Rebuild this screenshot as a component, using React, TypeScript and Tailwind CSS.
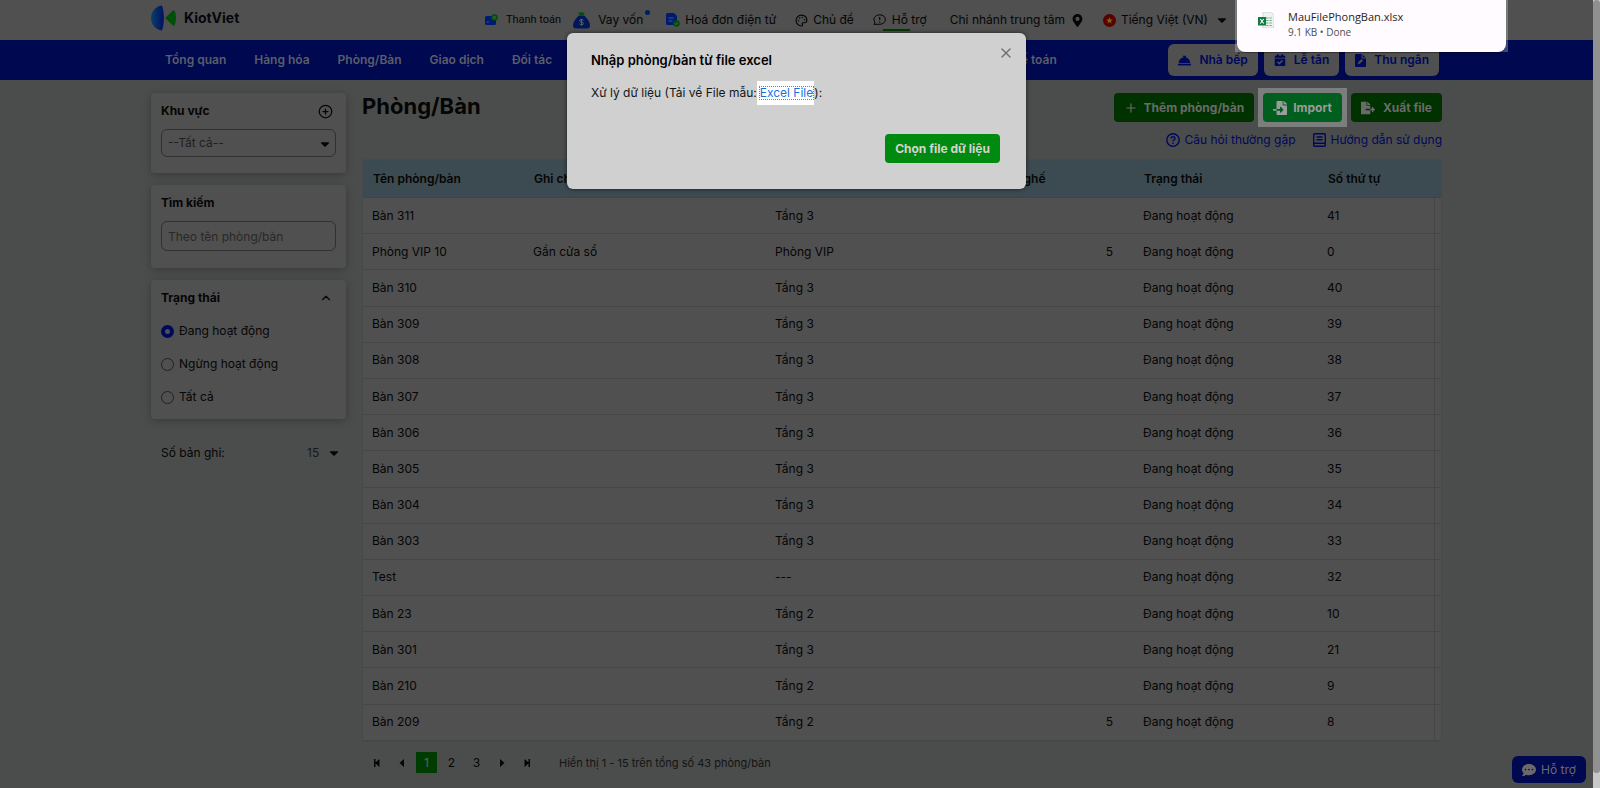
import type { ReactNode } from "react"
import { FaCaretDown, FaCalendarCheck, FaCommentDots, FaConciergeBell, FaFileExport, FaFileImport, FaMapMarkerAlt } from "react-icons/fa"
import { ChevronUp, CirclePlus, Palette, Plus, X } from "lucide-react"

interface Room {
  name: string
  note?: string
  area: string
  seats?: number
  order: number
}

const rooms: Room[] = [
  { name: "Bàn 311", area: "Tầng 3", order: 41 },
  { name: "Phòng VIP 10", note: "Gần cửa sổ", area: "Phòng VIP", seats: 5, order: 0 },
  { name: "Bàn 310", area: "Tầng 3", order: 40 },
  { name: "Bàn 309", area: "Tầng 3", order: 39 },
  { name: "Bàn 308", area: "Tầng 3", order: 38 },
  { name: "Bàn 307", area: "Tầng 3", order: 37 },
  { name: "Bàn 306", area: "Tầng 3", order: 36 },
  { name: "Bàn 305", area: "Tầng 3", order: 35 },
  { name: "Bàn 304", area: "Tầng 3", order: 34 },
  { name: "Bàn 303", area: "Tầng 3", order: 33 },
  { name: "Test", area: "---", order: 32 },
  { name: "Bàn 23", area: "Tầng 2", order: 10 },
  { name: "Bàn 301", area: "Tầng 3", order: 21 },
  { name: "Bàn 210", area: "Tầng 2", order: 9 },
  { name: "Bàn 209", area: "Tầng 2", seats: 5, order: 8 },
]

const navLinks = ["Tổng quan", "Hàng hóa", "Phòng/Bàn", "Giao dịch", "Đối tác"]

const statuses = ["Đang hoạt động", "Ngừng hoạt động", "Tất cả"]

const Logo = () => (
  <a href="#" className="flex items-center gap-2">
    <svg width="25" height="26" viewBox="0 0 25 26" aria-hidden="true">
      <defs>
        <linearGradient id="logo-blue" x1="0" x2="1">
          <stop offset="0" stopColor="#0a4068" />
          <stop offset="1" stopColor="#001060" />
        </linearGradient>
      </defs>
      <path d="M11 0.5C4 1.500 0 7 0 13s4 11.500 11 12.500C13.500 18 13.500 8 11 .5Z" fill="url(#logo-blue)" />
      <path d="M14 13L22 5.500q1-.8 1.600.3Q25 9 25 13t-1.400 7.200q-.6 1.100-1.600.3Z" fill="#004f08" />
    </svg>
    <span className="text-sm font-bold text-[#05070d]">KiotViet</span>
  </a>
)

const CardIcon = () => (
  <svg width="13" height="12" viewBox="0 0 13 12" aria-hidden="true">
    <rect x="0" y="2" width="11" height="9" rx="1.500" fill="#001a70" />
    <path d="M1.500 8h2.500" stroke="#2a5090" />
    <circle cx="9.500" cy="3.500" r="3.300" fill="#004f08" />
    <circle cx="9.500" cy="3.500" r="1.200" fill="none" stroke="#507050" strokeWidth=".8" />
  </svg>
)

const MoneyBag = () => (
  <svg width="17" height="17" viewBox="0 0 17 17" aria-hidden="true">
    <path d="M5 0l2 1 1.500-1L10 1l2-1-1.500 3h-4Z" fill="#004f08" />
    <path d="M6 3.500h5C14 6 17 10 17 13.500q0 3-3 3H3q-3 0-3-3C0 10 3 6 6 3.500Z" fill="#00185a" />
    <path d="M10.500 8.200c-1-1.200-4-.9-3.800.7.2 1.500 3.800.8 3.800 2.500 0 1.600-3 1.700-4 .4M8.500 6.800v6.700" stroke="#606060" fill="none" />
  </svg>
)

const InvoiceIcon = () => (
  <svg width="14" height="14" viewBox="0 0 14 14" aria-hidden="true">
    <path d="M1.500 0H8l3 3v9H1.500Q0 12 0 10.500v-9Q0 0 1.500 0Z" fill="#001a70" />
    <path d="M2.500 5h5M2.500 8h4" stroke="#3a5a90" />
    <circle cx="10.500" cy="10.500" r="3.300" fill="#004f08" />
    <path d="M9 10.500l1 1 2-2" stroke="#507050" fill="none" />
  </svg>
)

const SpeechIcon = () => (
  <svg width="13" height="12" viewBox="0 0 13 12" fill="none" stroke="currentColor" aria-hidden="true">
    <path d="M1 11l1-2.600C-.8 5 2 .8 6.800.8c3.200 0 5.500 2 5.500 4.700s-2.300 4.800-5.500 4.800H1.400" />
    <path d="M6.700 3v3M6.700 7.200v1.200" strokeWidth="1.200" />
  </svg>
)

const BookIcon = () => (
  <svg width="13" height="14" viewBox="0 0 13 14" fill="none" stroke="currentColor" strokeWidth="1.400" aria-hidden="true">
    <rect x=".7" y=".7" width="11.600" height="12.600" rx="1" />
    <path d="M1 10.300h11M3.500 4h6M3.500 6.700h6" />
  </svg>
)

const VnFlag = () => (
  <svg width="13" height="13" viewBox="0 0 13 13" aria-hidden="true">
    <circle cx="6.500" cy="6.500" r="6.500" fill="#580000" />
    <path d="M6.500 3l.9 2.500H10L7.900 7l.8 2.600-2.200-1.500-2.200 1.500.8-2.600L3 5.500h2.600Z" fill="#806800" />
  </svg>
)

const ExcelIcon = () => (
  <svg width="16" height="16" viewBox="0 0 16 16" aria-hidden="true">
    <path d="M5 0h8l3 3v13H5Z" fill="#eef3f0" stroke="#b9c9c0" strokeWidth=".6" />
    <path d="M8 6h6M8 8.500h6M8 11h6M8 13.500h6" stroke="#6fb08c" strokeWidth="1.200" strokeDasharray="2.500 .8" />
    <rect x="0" y="5" width="8" height="8.500" fill="#107c41" />
    <path d="M2.300 7l3.400 4.500M5.700 7l-3.400 4.500" stroke="#fff" strokeWidth="1.100" />
  </svg>
)

const CashierIcon = () => (
  <svg width="11" height="13" viewBox="0 0 11 13" aria-hidden="true">
    <path d="M1 0h6l4 4v8q0 1-1 1H1q-1 0-1-1V1q0-1 1-1Z" fill="#00085c" />
    <path d="M7 0v4h4" fill="none" stroke="#505050" />
    <path d="M2.500 10.500l1-2.500 3-3 1.500 1.500-3 3Z" fill="#505050" />
  </svg>
)

const QuestionIcon = () => (
  <svg width="14" height="14" viewBox="0 0 14 14" fill="none" stroke="currentColor" strokeWidth="1.400" aria-hidden="true">
    <circle cx="7" cy="7" r="6.200" />
    <path d="M5 5.600c0-2.700 4-2.500 4-.1C9 7 7 6.900 7 8.300M7 9.500v1.400" />
  </svg>
)

const PageArrow = ({ label, bar, flip }: { label: string; bar?: boolean; flip?: boolean }) => (
  <button aria-label={label} className="flex size-[21px] items-center justify-center">
    <svg width="8" height="8" viewBox="0 0 8 8" fill="currentColor" className={flip ? "rotate-180" : ""} aria-hidden="true">
      <path d={bar ? "M1 0h1.500v3.500L6.500 0v8L2.500 4.500V8H1Z" : "M6 0v8L1.500 4Z"} />
    </svg>
  </button>
)

const TopItem = ({ icon, children }: { icon: ReactNode; children: ReactNode }) => (
  <a href="#" className="flex items-center gap-[5px]">
    {icon}
    {children}
  </a>
)

const Panel = ({ title, action, children }: { title: string; action?: ReactNode; children: ReactNode }) => (
  <section className="rounded-sm bg-[#505050] px-[10px] pt-[9px] shadow-[0_2px_8px_rgba(0,0,0,0.25)]">
    <div className="mb-[9px] flex h-[18px] items-center justify-between pr-[3px]">
      <h2 className="font-bold">{title}</h2>
      {action}
    </div>
    {children}
  </section>
)

const TopBar = () => (
  <header className="h-10 bg-[#505050]">
    <div className="mx-auto flex h-full max-w-[1291px] items-center pb-1">
      <Logo />
      <div className="mr-[213px] ml-auto flex items-center gap-[19px] pt-1">
        <div className="flex items-center gap-3">
          <a href="#" className="flex items-center gap-2 font-[Roboto,sans-serif] text-[11px]">
            <CardIcon />
            Thanh toán
          </a>
          <a href="#" className="relative flex items-center gap-2 pr-1">
            <MoneyBag />
            Vay vốn
            <span className="absolute top-0 -right-[3px] size-[5px] rounded-full bg-[#00205a]" />
          </a>
        </div>
        <TopItem icon={<InvoiceIcon />}>Hoá đơn điện tử</TopItem>
        <TopItem icon={<Palette size={13} />}>Chủ đề</TopItem>
        <a href="#" className="relative flex items-center gap-[6px] pr-1">
          <SpeechIcon />
          Hỗ trợ
          <span className="absolute -bottom-px left-[10px] h-[2px] w-[27px] bg-[#003c00]" />
        </a>
        <a href="#" className="flex items-center gap-[6px]">
          Chi nhánh trung tâm
          <FaMapMarkerAlt size={13} />
        </a>
        <button className="flex items-center gap-[5px]">
          <VnFlag />
          Tiếng Việt (VN)
          <FaCaretDown size={14} className="ml-[2px]" />
        </button>
      </div>
    </div>
  </header>
)

const NavBar = () => (
  <nav className="h-10 bg-[#000850] text-[#5a5e68]">
    <div className="mx-auto flex h-full max-w-[1291px] items-center justify-between pr-[3px]">
      <div className="flex font-semibold">
        {navLinks.map((link) => (
          <a key={link} href="#" className="px-[14px] whitespace-nowrap">
            {link}
          </a>
        ))}
        <a href="#" className="ml-[389px] px-[14px] whitespace-nowrap">
          Thuế & Kế toán
        </a>
      </div>
      <div className="flex gap-[6px] font-semibold text-[#00085c]">
        <a href="#" className="flex h-8 items-center gap-2 rounded-md bg-[#505050] px-[10px]">
          <FaConciergeBell size={13} />
          Nhà bếp
        </a>
        <a href="#" className="flex h-8 items-center gap-2 rounded-md bg-[#505050] px-[10px]">
          <FaCalendarCheck size={12} />
          Lễ tân
        </a>
        <a href="#" className="flex h-8 items-center gap-2 rounded-md bg-[#505050] px-[10px]">
          <CashierIcon />
          Thu ngân
        </a>
      </div>
    </div>
  </nav>
)

const Sidebar = () => (
  <aside className="flex w-[195px] shrink-0 flex-col gap-3">
    <Panel
      title="Khu vực"
      action={
        <button aria-label="Thêm khu vực">
          <CirclePlus size={15} />
        </button>
      }
    >
      <div className="relative pb-4">
        <select aria-label="Khu vực" className="h-7 w-full appearance-none rounded-md border border-[#303030] px-[6px] text-[#202020]">
          <option>--Tất cả--</option>
        </select>
        <FaCaretDown size={14} className="pointer-events-none absolute top-[8px] right-1" />
      </div>
    </Panel>
    <Panel title="Tìm kiếm">
      <input
        aria-label="Tìm kiếm"
        placeholder="Theo tên phòng/bàn"
        className="mb-[17px] block h-[30px] w-full rounded-md border border-[#303030] px-[6px] placeholder:text-[#282828]"
      />
    </Panel>
    <Panel
      title="Trạng thái"
      action={
        <button aria-label="Thu gọn">
          <ChevronUp size={14} />
        </button>
      }
    >
      <div className="flex flex-col gap-[13px] pt-[5px] pb-3">
        {statuses.map((status, index) => (
          <label key={status} className="flex h-5 items-center gap-[5px]">
            <input
              type="radio"
              name="status"
              defaultChecked={index === 0}
              className="size-[13px] appearance-none rounded-full border border-[#202020] checked:border-4 checked:border-[#00085c]"
            />
            {status}
          </label>
        ))}
      </div>
    </Panel>
    <div className="relative mt-3 flex h-5 items-center justify-between pl-[10px]">
      <label htmlFor="page-size">Số bản ghi:</label>
      <select id="page-size" className="w-[39px] appearance-none text-[#181818]">
        <option>15</option>
      </select>
      <FaCaretDown size={14} className="pointer-events-none absolute right-[5px]" />
    </div>
  </aside>
)

const RoomTable = () => (
  <table className="h-[583px] w-full table-fixed border-separate border-spacing-0 border border-[#464a4a] bg-[#505050] text-left">
    <colgroup>
      <col className="w-[161px]" />
      <col className="w-[242px]" />
      <col className="w-[194px]" />
      <col className="w-[174px]" />
      <col className="w-[184px]" />
      <col />
      <col className="w-[7px]" />
    </colgroup>
    <thead>
      <tr className="h-[38px] bg-[#3c4b51] [&>th]:border-b [&>th]:border-[#3a4649] [&>th]:px-[10px] [&>th]:font-semibold">
        <th>Tên phòng/bàn</th>
        <th>Ghi chú</th>
        <th>Khu vực</th>
        <th>Số lượng ghế</th>
        <th>Trạng thái</th>
        <th>Số thứ tự</th>
        <td className="border-b border-[#3a4649]" />
      </tr>
    </thead>
    <tbody>
      {rooms.map((room) => (
        <tr key={room.name} className="[&>td]:border-b [&>td]:border-[#464646] [&>td]:px-[9px]">
          <td>{room.name}</td>
          <td>{room.note}</td>
          <td>{room.area}</td>
          <td>
            <div className="pr-3 text-right">{room.seats}</div>
          </td>
          <td>Đang hoạt động</td>
          <td>{room.order}</td>
          <td className="border-l" />
        </tr>
      ))}
    </tbody>
  </table>
)

const Pager = () => (
  <div className="mt-[10px] flex h-[21px] items-center gap-1 pl-1">
    <PageArrow label="Trang đầu" bar />
    <PageArrow label="Trang trước" />
    <button className="size-[21px] bg-[#003c00] text-[#606060]">1</button>
    <button className="size-[21px]">2</button>
    <button className="size-[21px]">3</button>
    <PageArrow label="Trang sau" flip />
    <PageArrow label="Trang cuối" bar flip />
    <span className="pl-[18px] text-[11px] text-[#141414]">Hiển thị 1 - 15 trên tổng số 43 phòng/bàn</span>
  </div>
)

const Main = () => (
  <main className="min-w-0 flex-1">
    <div className="flex items-start justify-between">
      <h1 className="text-[22px] leading-[26px] font-bold">Phòng/Bàn</h1>
      <div className="flex gap-[9px] font-bold text-[#6a6a6a]">
        <button className="flex h-[29px] items-center gap-[6px] rounded-sm bg-[#003200] px-[10px]">
          <Plus size={14} />
          Thêm phòng/bàn
        </button>
        <div className="-m-[5px] bg-[#7c7e7d] p-[5px]">
          <button className="flex h-[29px] items-center gap-[6px] rounded-sm bg-[#005f1f] px-[10px] text-[#9c9c9c]">
            <FaFileImport size={14} />
            Import
          </button>
        </div>
        <button className="flex h-[29px] items-center gap-2 rounded-sm bg-[#003200] px-[10px]">
          <FaFileExport size={14} />
          Xuất file
        </button>
      </div>
    </div>
    <div className="mt-2 mb-[10px] flex h-[19px] items-center justify-end gap-[18px] text-[#00085c]">
      <a href="#" className="flex items-center gap-1">
        <QuestionIcon />
        Câu hỏi thường gặp
      </a>
      <a href="#" className="flex items-center gap-1">
        <BookIcon />
        Hướng dẫn sử dụng
      </a>
    </div>
    <RoomTable />
    <Pager />
  </main>
)

const ImportDialog = () => (
  <div
    role="dialog"
    aria-labelledby="import-title"
    className="absolute top-[33px] right-[7px] left-0 mx-auto h-[156px] w-[459px] rounded-md bg-[#d0d0d0] px-6 pt-[17px] text-black shadow-[0_0_4px_rgba(0,0,0,0.6)]"
  >
    <h2 id="import-title" className="text-[13px] leading-5 font-semibold">
      Nhập phòng/bàn từ file excel
    </h2>
    <button aria-label="Đóng" className="absolute top-3 right-3 text-[#707070]">
      <X size={16} strokeWidth={2} />
    </button>
    <p className="mt-[11px] flex h-6 items-center text-[#151515]">
      Xử lý dữ liệu (Tải về File mẫu:
      <span className="flex h-6 items-center bg-white pl-[2px]">
        <a href="#" className="border border-dotted border-[#5a80f0] leading-3 text-[#1a6fe0]">
          Excel File
        </a>
      </span>
      ):
    </p>
    <div className="mt-[29px] flex justify-end pr-[2px]">
      <button className="h-[29px] rounded-sm bg-[#008a0f] px-[10px] font-bold text-[#d4d4d4]">Chọn file dữ liệu</button>
    </div>
  </div>
)

const DownloadToast = () => (
  <div className="absolute top-0 right-[92px] w-[273px] bg-white/25 px-[2px]">
    <div className="flex h-[52px] gap-[14px] rounded-b-lg bg-[#fffbff] pt-2 pl-[21px] shadow-[0_1px_1px_rgba(0,0,0,0.4)]">
      <div className="pt-1">
        <ExcelIcon />
      </div>
      <div className="font-['Open_Sans',sans-serif]">
        <div className="text-[11px] leading-[18px] text-[#1f1f1f]">MauFilePhongBan.xlsx</div>
        <div className="text-[10px] leading-3 text-[#505050]">9.1 KB • Done</div>
      </div>
    </div>
  </div>
)

export default function App() {
  return (
    <div className="relative min-h-screen bg-[#4b4d4c] pr-[7px] font-[Inter,sans-serif] text-xs leading-5 text-[#050505]">
      <TopBar />
      <NavBar />
      <div className="mx-auto flex max-w-[1291px] gap-4 pt-[13px]">
        <Sidebar />
        <Main />
      </div>
      <ImportDialog />
      <DownloadToast />
      <button className="absolute right-[14px] bottom-[5px] flex h-[27px] items-center gap-[5px] rounded-md bg-[#000850] px-[10px] text-[#6a6a6a]">
        <FaCommentDots size={14} />
        Hỗ trợ
      </button>
      <div className="absolute inset-y-0 right-0 w-[7px] bg-[#c8c8c8] pb-[15px]">
        <div className="h-full rounded-full bg-[#909090]" />
      </div>
    </div>
  )
}
